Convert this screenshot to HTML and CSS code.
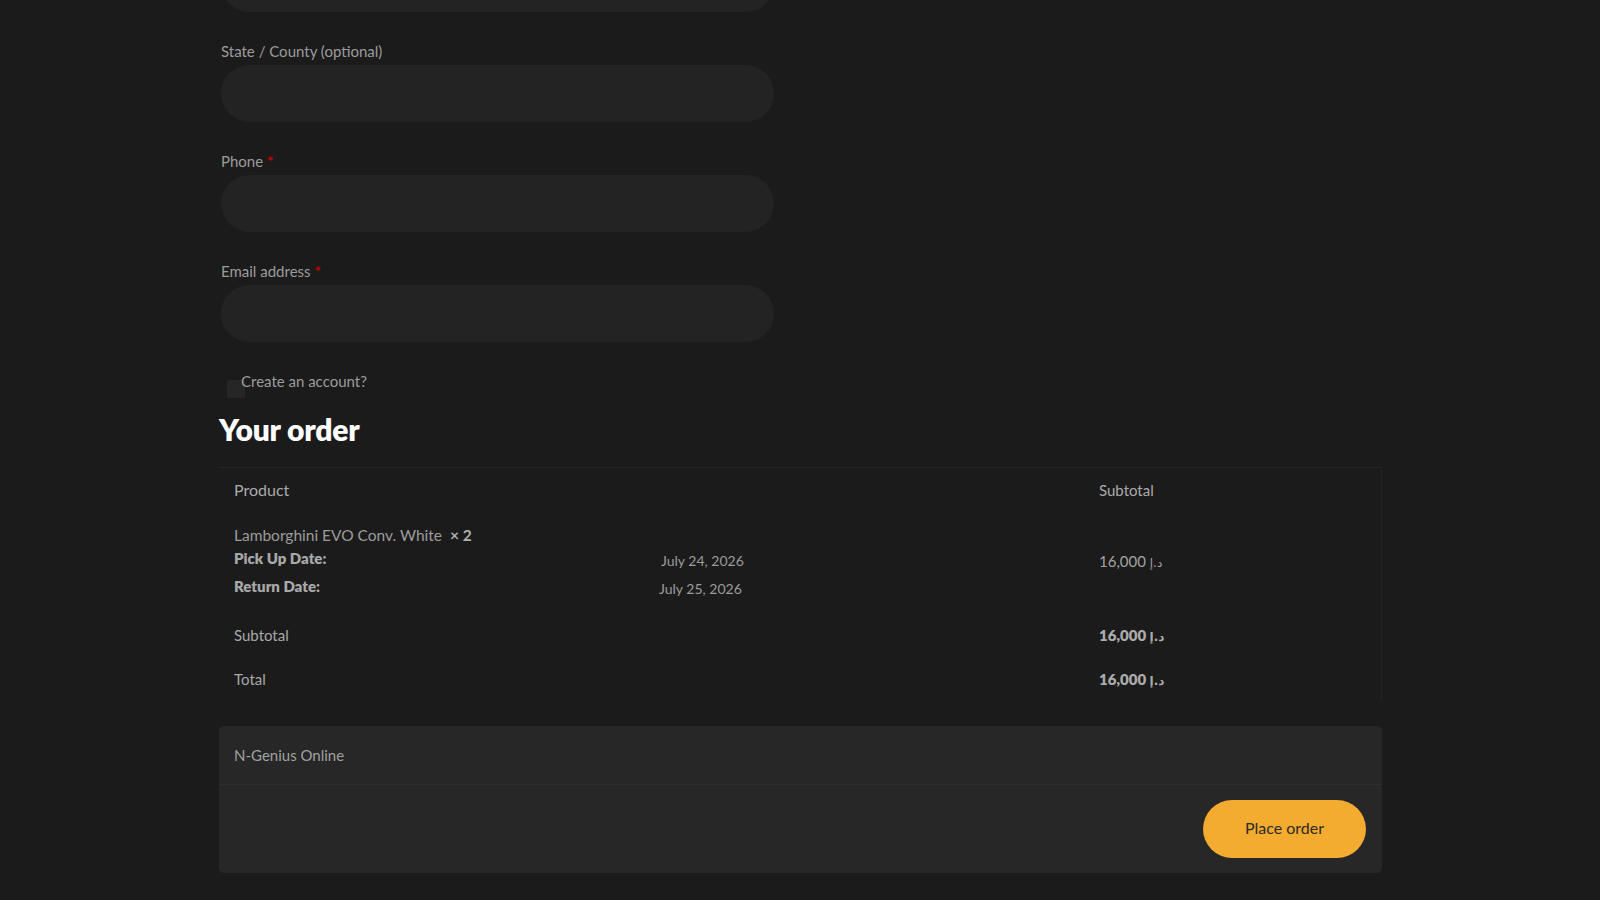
FILE: index.html
```html
<!DOCTYPE html>
<html lang="en">
<head>
<meta charset="utf-8">
<title>Checkout</title>
<link rel="stylesheet" href="styles.css">
</head>
<body>
<main class="checkout">
  <section class="billing">
    <div class="field field-first">
      <div class="input"></div>
    </div>
    <div class="field">
      <label class="label">State / County (optional)</label>
      <div class="input"></div>
    </div>
    <div class="field">
      <label class="label">Phone <span class="req">*</span></label>
      <div class="input"></div>
    </div>
    <div class="field">
      <label class="label">Email address <span class="req">*</span></label>
      <div class="input"></div>
    </div>
    <div class="account-row">
      <span class="checkbox"></span>
      <span class="account-text">Create an account?</span>
    </div>
  </section>

  <h3 class="order-title">Your order</h3>

  <div class="order-table">
    <div class="row head">
      <div class="cell c1">Product</div>
      <div class="cell c2">Subtotal</div>
    </div>
    <div class="row item">
      <div class="cell c1">
        <div class="product-name">Lamborghini EVO Conv. White&nbsp; <strong class="qty">×&nbsp;2</strong></div>
        <div class="meta">
          <div class="meta-key">Pick Up Date:</div>
          <div class="meta-val">July 24, 2026</div>
          <div class="meta-key">Return Date:</div>
          <div class="meta-val v2">July 25, 2026</div>
        </div>
      </div>
      <div class="cell c2 mid"><span class="amount">16,000 <span class="cur">د.إ</span></span></div>
    </div>
    <div class="row total-row">
      <div class="cell c1">Subtotal</div>
      <div class="cell c2"><strong class="amount">16,000 <span class="cur">د.إ</span></strong></div>
    </div>
    <div class="row total-row">
      <div class="cell c1">Total</div>
      <div class="cell c2"><strong class="amount">16,000 <span class="cur">د.إ</span></strong></div>
    </div>
  </div>

  <div class="payment">
    <div class="payment-method">N-Genius Online</div>
    <div class="payment-foot">
      <button class="place-order" type="button">Place order</button>
    </div>
  </div>
</main>
</body>
</html>
```

FILE: styles.css
```css
html, body {
  margin: 0;
  padding: 0;
  background: #1b1b1b;
  height: 100%;
  overflow: hidden;
}

body {
  font-family: "Lato", "DejaVu Sans", sans-serif;
  color: #a3a3a3;
  font-size: 15px;
}

.checkout {
  width: 1163px;
  margin-left: 219px;
}

.billing {
  width: 553px;
  padding-left: 2px;
}

.field {
  margin-bottom: 28px;
}

.field-first {
  margin-top: -45px;
}

.label {
  display: block;
  height: 22px;
  line-height: 22px;
  margin-bottom: 3px;
  color: #9c9c9c;
  font-size: 15px;
}

.req {
  color: #c40000;
  font-weight: 700;
}

.input {
  height: 57px;
  border-radius: 29px;
  background: #232323;
}

.account-row {
  display: flex;
  align-items: flex-start;
  margin-top: 24px;
  height: 27px;
}

.checkbox {
  width: 18px;
  height: 18px;
  margin-left: 6px;
  margin-top: 10px;
  background: #262626;
  flex: none;
}

.account-text {
  margin-left: -4px;
  line-height: 22px;
  color: #9c9c9c;
}

.order-title {
  margin: 14px 0 20px;
  color: #ffffff;
  font-size: 30px;
  line-height: 36px;
  font-weight: 800;
  letter-spacing: -0.2px;
}

.order-table {
  border-top: 1px solid #242424;
  border-right: 1px solid #242424;
}

.row {
  display: flex;
}

.cell {
  box-sizing: border-box;
  padding: 0 15px;
  line-height: 22px;
}

.c1 {
  width: 865px;
}

.c2 {
  width: 297px;
}

.head .cell {
  padding-top: 11px;
  padding-bottom: 13px;
  color: #ababab;
}

.head .c1 {
  font-size: 16px;
}

.item .cell {
  padding-top: 10px;
  padding-bottom: 13px;
}

.mid {
  display: flex;
  align-items: center;
}

.product-name {
  color: #9c9c9c;
  font-size: 15.5px;
}

.qty {
  font-weight: 700;
  color: #b0b0b0;
}

.meta {
  display: grid;
  grid-template-columns: 427px auto;
  row-gap: 3px;
  margin-top: 1px;
}

.meta-key {
  font-weight: 800;
  color: #a8a8a8;
  line-height: 22px;
}

.meta-val {
  line-height: 22px;
  padding-top: 3px;
  color: #9c9c9c;
  font-size: 14px;
}

.meta-val.v2 {
  margin-left: -2px;
}

.amount {
  color: #a3a3a3;
}

strong.amount {
  font-weight: 800;
  color: #ababab;
}

.cur {
  font-family: "DejaVu Sans", sans-serif;
  font-size: 12px;
}

.total-row .cell {
  padding-top: 11px;
  padding-bottom: 9px;
}

.total-row .c1 {
  color: #a8a8a8;
}

.payment {
  margin-top: 25px;
  width: 1163px;
  background: #272727;
  border-radius: 5px;
}

.payment-method {
  height: 58px;
  line-height: 58px;
  padding-left: 15px;
  border-bottom: 1px solid #2e2e2e;
  color: #a0a0a0;
  font-size: 15px;
}

.payment-foot {
  display: flex;
  justify-content: flex-end;
  padding: 15px 16px 15px;
}

.place-order {
  width: 163px;
  height: 58px;
  padding: 0 0 3px;
  border: none;
  border-radius: 29px;
  background: #f3ac30;
  color: #2d2a26;
  font-family: "Lato", sans-serif;
  font-size: 16px;
  cursor: pointer;
}
```
